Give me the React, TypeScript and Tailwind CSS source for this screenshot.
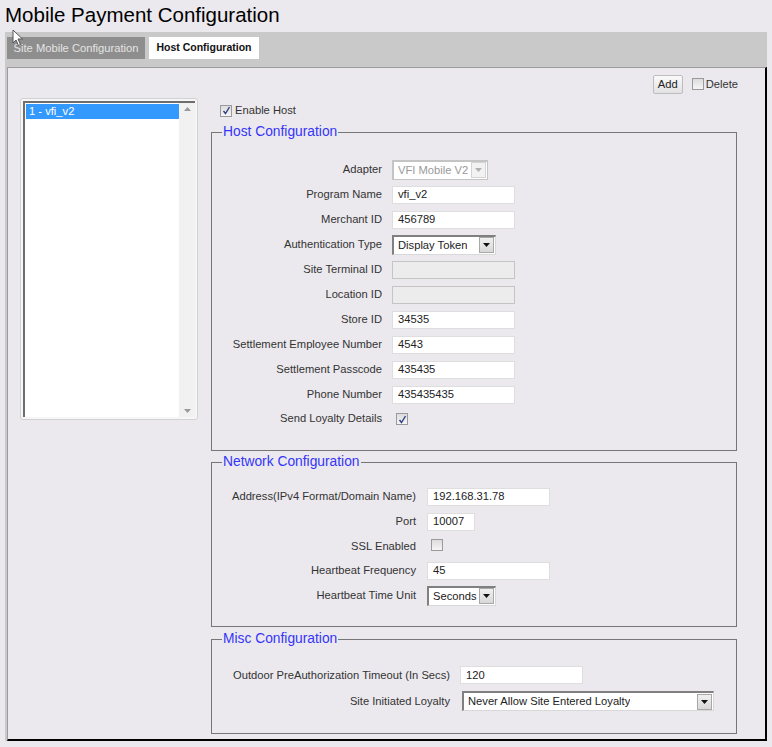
import React from "react";

const Check = ({ checked }: { checked?: boolean }) => (
    <span className="inline-flex size-[12px] shrink-0 items-center justify-center border border-[#9a9a9a] bg-gradient-to-b from-[#dcdcdc] to-[#f6f6f6]">
        {checked && (
            <svg width="9" height="9" viewBox="0 0 9 9">
                <path d="M1.5 5 L3.5 7.5 L7.5 1" fill="none" stroke="#2f3f86" strokeWidth="1.4" />
            </svg>
        )}
    </span>
);

const TextBox = ({ value, width = "w-[123px]", disabled }: { value?: string; width?: string; disabled?: boolean }) => (
    <div
        className={
            width +
            " flex h-[18px] items-center border px-[5px] text-[11.2px] text-[#222] " +
            (disabled ? "bg-[#ececec] border-[#c4c4c4]" : "bg-white border-[#dedede]")
        }
    >
        {value}
    </div>
);

const Arrow = ({ disabled }: { disabled?: boolean }) => (
    <div
        className={
            "flex h-[16px] w-[15px] shrink-0 items-center justify-center border " +
            (disabled ? "border-[#d4d4d4] bg-[#f2f2f2]" : "border-[#a8a8a8] bg-gradient-to-b from-[#f0f0f0] to-[#d8d8d8]")
        }
    >
        <svg width="7" height="4" viewBox="0 0 7 4">
            <path d="M0 0 H7 L3.5 4 Z" fill={disabled ? "#b0b0b0" : "#111"} />
        </svg>
    </div>
);

const Select = ({ value, width, disabled }: { value: string; width: string; disabled?: boolean }) => (
    <div
        className={
            width +
            " flex h-[20px] items-center justify-between border-l-2 border-t-2 border-r border-b bg-white pl-[4px] pr-[1px] text-[11.2px] " +
            (disabled ? "border-[#c4c4c4] text-[#9a9a9a]" : "border-l-[#808080] border-t-[#808080] border-r-[#d8d8d8] border-b-[#d8d8d8] text-[#222]")
        }
    >
        <span className="truncate">{value}</span>
        <Arrow disabled={disabled} />
    </div>
);

const Row = ({ label, labelW, gap = "gap-[10px]", h = "h-[25px]", children }: { label: string; labelW: string; gap?: string; h?: string; children: React.ReactNode }) => (
    <div className={"flex items-center " + gap + " " + h}>
        <div className={labelW + " shrink-0 text-right text-[11.2px] text-[#333]"}>{label}</div>
        {children}
    </div>
);

const Group = ({ title, className, children }: { title: string; className: string; children: React.ReactNode }) => (
    <fieldset className={"border border-[#767676] " + className}>
        <legend className="ml-[10px] px-[1px] text-[13.8px] leading-[16px] text-[#3535f8]">{title}</legend>
        {children}
    </fieldset>
);

export default function App() {
    const hostW = "w-[170px]";
    const netW = "w-[204px]";
    const miscW = "w-[238px]";

    return (
        <div className="relative min-h-[747px] w-full bg-[#ebe9ee] font-['Liberation_Sans',Arial,sans-serif] text-[#333]">
            <h1 className="h-[32px] pl-[5px] pt-[3px] text-[20.5px] leading-[24px] text-black">Mobile Payment Configuration</h1>

            <div className="mx-[5px] bg-[#c9c9c9] pl-[2px] pt-[5px]">
                <div className="flex h-[22px] gap-[4px]">
                    <div className="flex w-[138px] items-center justify-center bg-[#8e8e8e] text-[11.2px] text-[#e4e4e4]">Site Mobile Configuration</div>
                    <div className="flex w-[110px] items-center justify-center bg-white text-[10.5px] font-bold text-[#111]">Host Configuration</div>
                </div>

                <div className="mt-[8px] border-l border-t border-[#9c9c9c] border-r-2 border-b-2 border-r-black border-b-black bg-[#ebe9ee] pb-[5px]">
                    <div className="flex items-center justify-end gap-[9px] pr-[27px] pt-[7px]">
                        <div className="flex h-[19px] w-[30px] items-center justify-center rounded-[2px] border border-[#bdbdbd] bg-gradient-to-b from-[#fafafa] to-[#e2e2e2] text-[11.2px] text-[#222]">Add</div>
                        <div className="flex items-center gap-[2px]">
                            <Check />
                            <span className="text-[11.2px] text-[#333]">Delete</span>
                        </div>
                    </div>

                    <div className="mt-[4px] flex gap-[13px] pl-[12px]">
                        <div className="h-[322px] w-[178px] rounded-[3px] border border-[#d2d2d2] bg-[#f6f6f6] p-[2px]">
                            <div className="flex h-full border-l-2 border-t-2 border-[#6e6e6e] bg-white">
                                <div className="flex-1 pl-[1px] pt-[1px]">
                                    <div className="flex h-[15px] items-center bg-[#3399ff] pl-[3px] text-[11.2px] text-white">1 - vfi_v2</div>
                                </div>
                                <div className="flex w-[16px] flex-col items-center justify-between bg-[#f1f1f1] py-[4px]">
                                    <svg width="7" height="4" viewBox="0 0 7 4"><path d="M0 4 H7 L3.5 0 Z" fill="#9a9a9a" /></svg>
                                    <svg width="7" height="4" viewBox="0 0 7 4"><path d="M0 0 H7 L3.5 4 Z" fill="#9a9a9a" /></svg>
                                </div>
                            </div>
                        </div>

                        <div className="w-[526px]">
                            <div className="flex h-[25px] items-center gap-[3px] pl-[9px]">
                                <Check checked />
                                <span className="text-[11.2px] text-[#333]">Enable Host</span>
                            </div>

                            <Group title="Host Configuration" className="mt-[1px] pb-[20px] pt-[17px]">
                                <Row label="Adapter" labelW={hostW}><Select value="VFI Mobile V2" width="w-[96px]" disabled /></Row>
                                <Row label="Program Name" labelW={hostW}><TextBox value="vfi_v2" /></Row>
                                <Row label="Merchant ID" labelW={hostW}><TextBox value="456789" /></Row>
                                <Row label="Authentication Type" labelW={hostW}><Select value="Display Token" width="w-[104px]" /></Row>
                                <Row label="Site Terminal ID" labelW={hostW}><TextBox disabled /></Row>
                                <Row label="Location ID" labelW={hostW}><TextBox disabled /></Row>
                                <Row label="Store ID" labelW={hostW}><TextBox value="34535" /></Row>
                                <Row label="Settlement Employee Number" labelW={hostW}><TextBox value="4543" /></Row>
                                <Row label="Settlement Passcode" labelW={hostW}><TextBox value="435435" /></Row>
                                <Row label="Phone Number" labelW={hostW}><TextBox value="435435435" /></Row>
                                <Row label="Send Loyalty Details" labelW={hostW} h="h-[23px]"><span className="ml-[4px]"><Check checked /></span></Row>
                            </Group>

                            <Group title="Network Configuration" className="mt-[3px] pb-[18px] pt-[14px]">
                                <Row label="Address(IPv4 Format/Domain Name)" labelW={netW} gap="gap-[11px]"><TextBox value="192.168.31.78" /></Row>
                                <Row label="Port" labelW={netW} gap="gap-[11px]"><TextBox value="10007" width="w-[48px]" /></Row>
                                <Row label="SSL Enabled" labelW={netW} gap="gap-[11px]" h="h-[24px]"><span className="ml-[4px]"><Check /></span></Row>
                                <Row label="Heartbeat Frequency" labelW={netW} gap="gap-[11px]"><TextBox value="45" /></Row>
                                <Row label="Heartbeat Time Unit" labelW={netW} gap="gap-[11px]"><Select value="Seconds" width="w-[69px]" /></Row>
                            </Group>

                            <Group title="Misc Configuration" className="mt-[4px] pb-[19px] pt-[15px]">
                                <Row label="Outdoor PreAuthorization Timeout (In Secs)" labelW={miscW} h="h-[26px]"><TextBox value="120" /></Row>
                                <Row label="Site Initiated Loyalty" labelW={miscW} h="h-[26px]"><span className="ml-[2px]"><Select value="Never Allow Site Entered Loyalty" width="w-[252px]" /></span></Row>
                            </Group>
                        </div>
                    </div>
                </div>
            </div>

            <svg className="absolute left-[12px] top-[29px]" width="12" height="18" viewBox="0 0 12 18">
                <path d="M1 1 L1 14 L4 11 L6.5 16.5 L8.5 15.5 L6 10 L10.5 10 Z" fill="white" stroke="#555" strokeWidth="1" />
            </svg>
        </div>
    );
}
